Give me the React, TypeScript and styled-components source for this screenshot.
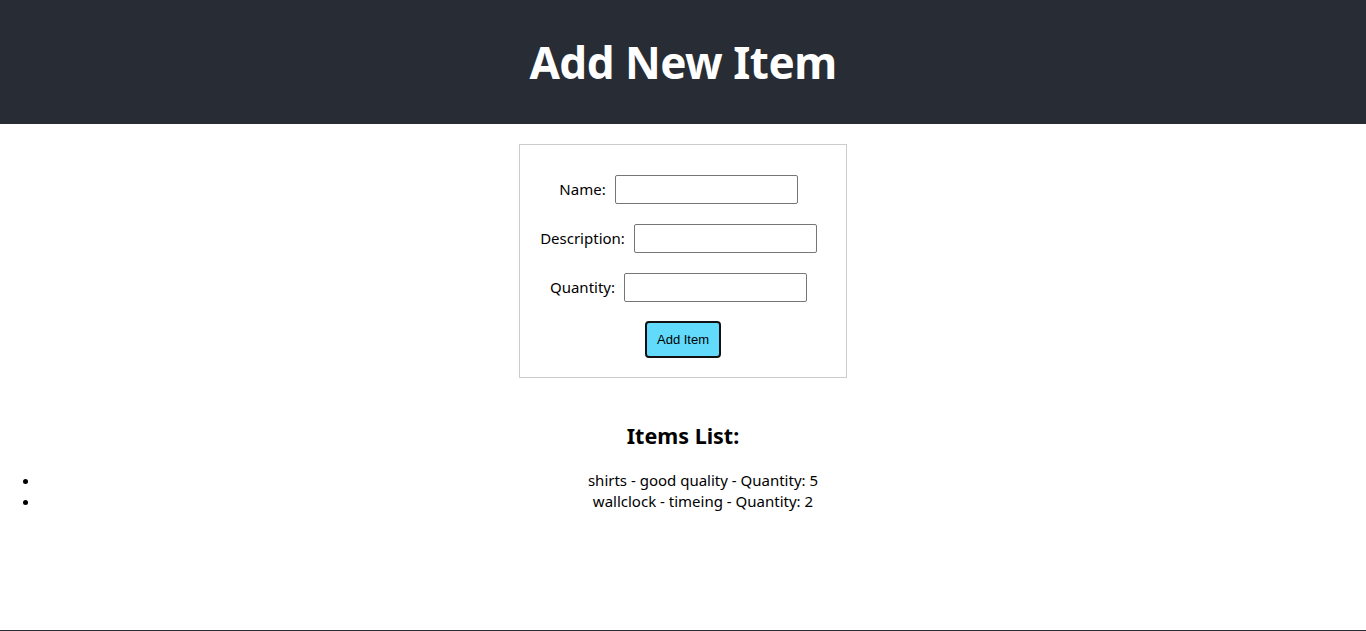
import * as React from 'react';
import styled, { createGlobalStyle } from 'styled-components';

const GlobalStyle = createGlobalStyle`
  body {
    margin: 0;
    font-family: "Noto Sans", "Open Sans", sans-serif;
    color: #000;
    background: #fff;
  }
`;

const Page = styled.div`
  display: flex;
  flex-direction: column;
  min-height: 100vh;
`;

const Header = styled.header`
  background: #282c34;
  height: 124px;
  display: flex;
  align-items: center;
  justify-content: center;
  h1 {
    margin: 0;
    color: #fff;
    font-size: 44px;
    font-weight: 700;
    letter-spacing: -0.5px;
  }
`;

const Main = styled.main`
  min-height: 506px;
  display: flex;
  flex-direction: column;
  align-items: center;
`;

const Form = styled.form`
  margin-top: 20px;
  width: 328px;
  box-sizing: border-box;
  border: 1px solid #ccc;
  padding: 30px 0 19px;
  display: flex;
  flex-direction: column;
  align-items: center;
  gap: 20px;
`;

const Row = styled.div`
  display: flex;
  align-items: center;
  justify-content: center;
  width: 100%;
  font-size: 15px;
  label {
    margin-right: 9px;
    position: relative;
    top: -1px;
  }
  input {
    width: 183px;
    height: 29px;
    box-sizing: border-box;
    border: 1px solid #767676;
    border-radius: 2px;
    margin-right: 9px;
    padding: 2px 4px;
  }
`;

const Button = styled.button`
  width: 76px;
  height: 37px;
  margin-top: -1px;
  background: #61dafb;
  border: 2px solid #111;
  border-radius: 4px;
  font-family: "Liberation Sans", Arial, sans-serif;
  font-size: 13px;
  color: #000;
  padding: 0;
`;

const ListSection = styled.section`
  width: 100%;
  text-align: center;
  h2 {
    margin: 42px 0 18px;
    font-size: 21.5px;
    font-weight: 700;
    line-height: 32px;
  }
  ul {
    margin: 0;
    padding-left: 40px;
  }
  li {
    font-size: 15px;
    line-height: 21px;
  }
`;

const Footer = styled.footer`
  background: #282c34;
  height: 40px;
`;

const items = [
  { name: 'shirts', description: 'good quality', quantity: 5 },
  { name: 'wallclock', description: 'timeing', quantity: 2 },
];

export default function App() {
  return (
    <Page>
      <GlobalStyle />
      <Header>
        <h1>Add New Item</h1>
      </Header>
      <Main>
        <Form onSubmit={(e) => e.preventDefault()}>
          <Row>
            <label>Name:</label>
            <input type="text" />
          </Row>
          <Row>
            <label>Description:</label>
            <input type="text" />
          </Row>
          <Row>
            <label>Quantity:</label>
            <input type="number" />
          </Row>
          <Button type="submit">Add Item</Button>
        </Form>
        <ListSection>
          <h2>Items List:</h2>
          <ul>
            {items.map((it) => (
              <li key={it.name}>
                {it.name} - {it.description} - Quantity: {it.quantity}
              </li>
            ))}
          </ul>
        </ListSection>
      </Main>
      <Footer />
    </Page>
  );
}
